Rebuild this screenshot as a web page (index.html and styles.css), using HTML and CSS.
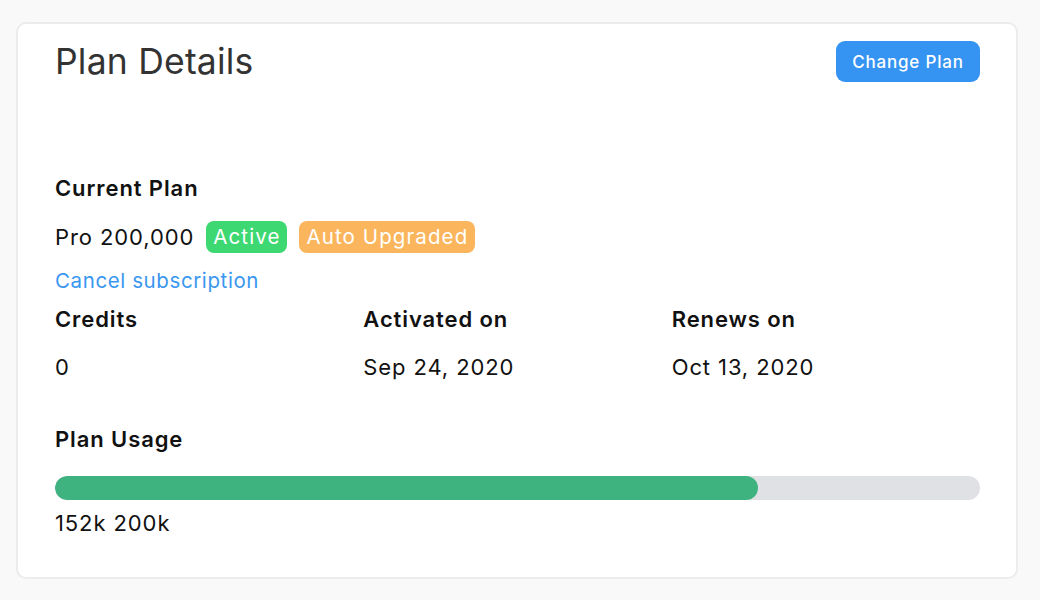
FILE: index.html
```html
<!DOCTYPE html>
<html>
<head>
<meta charset="utf-8">
<link rel="stylesheet" href="styles.css">
</head>
<body>
<div class="card">
  <div class="header">
    <h1 class="title">Plan Details</h1>
    <button class="btn">Change Plan</button>
  </div>
  <div class="section">
    <div class="label">Current Plan</div>
    <div class="plan-row">
      <span class="plan-name">Pro 200,000</span>
      <span class="badge badge-green">Active</span>
      <span class="badge badge-orange">Auto Upgraded</span>
    </div>
    <a class="link" href="#">Cancel subscription</a>
  </div>
  <div class="grid">
    <div class="cell">
      <div class="label">Credits</div>
      <div class="value">0</div>
    </div>
    <div class="cell">
      <div class="label">Activated on</div>
      <div class="value">Sep 24, 2020</div>
    </div>
    <div class="cell">
      <div class="label">Renews on</div>
      <div class="value">Oct 13, 2020</div>
    </div>
  </div>
  <div class="usage">
    <div class="label">Plan Usage</div>
    <div class="bar"><div class="fill" style="width: 76%"></div></div>
    <div class="value">152k 200k</div>
  </div>
</div>
</body>
</html>
```
FILE: styles.css
```css
html, body {
  margin: 0;
  background: #f9f9f9;
}
body {
  padding: 22px 22px 0 16px;
  font-family: Inter, "Noto Sans", sans-serif;
  color: #111;
}
.card {
  background: #fff;
  border: 2px solid #ececec;
  border-radius: 10px;
  padding: 14px 36px 36px 37px;
  height: 503px;
  box-sizing: content-box;
}
.header {
  display: flex;
  justify-content: space-between;
  align-items: flex-start;
  height: 138px;
}
.title {
  margin: 0;
  font-size: 35.5px;
  font-weight: 400;
  line-height: 48px;
  color: #333;
  letter-spacing: 0.2px;
}
.btn {
  margin-top: 3px;
  background: #3594f2;
  color: #fff;
  border: none;
  border-radius: 9px;
  font-family: Inter, sans-serif;
  font-size: 17px;
  font-weight: 500;
  letter-spacing: 0.8px;
  width: 144px;
  height: 41px;
  padding: 0;
}
.label {
  font-size: 22px;
  font-weight: 600;
  line-height: 24px;
  color: #111;
  letter-spacing: 0.9px;
}
.plan-row {
  display: flex;
  align-items: center;
  gap: 12px;
  margin-top: 21px;
  height: 32px;
}
.plan-name {
  font-size: 22px;
  letter-spacing: 0.9px;
}
.badge {
  color: #fff;
  font-size: 20.5px;
  font-weight: 400;
  line-height: 32px;
  padding: 0 7px;
  border-radius: 8px;
  letter-spacing: 1.1px;
}
.badge-green { background: #3ed873; }
.badge-orange { background: #fbb55c; }
.link {
  display: block;
  margin-top: 16px;
  color: #3a97f0;
  font-size: 20.5px;
  font-weight: 400;
  line-height: 24px;
  text-decoration: none;
  letter-spacing: 0.6px;
}
.grid {
  display: grid;
  grid-template-columns: repeat(3, 1fr);
  margin-top: 14px;
}
.value {
  font-size: 22px;
  line-height: 24px;
  margin-top: 24px;
  letter-spacing: 0.9px;
}
.usage {
  margin-top: 48px;
}
.bar {
  margin-top: 25px;
  height: 24px;
  background: #dfe1e5;
  border-radius: 12px;
  overflow: hidden;
}
.fill {
  height: 100%;
  background: #3fb37f;
  border-radius: 12px;
}
.usage .value {
  margin-top: 11px;
}
```
